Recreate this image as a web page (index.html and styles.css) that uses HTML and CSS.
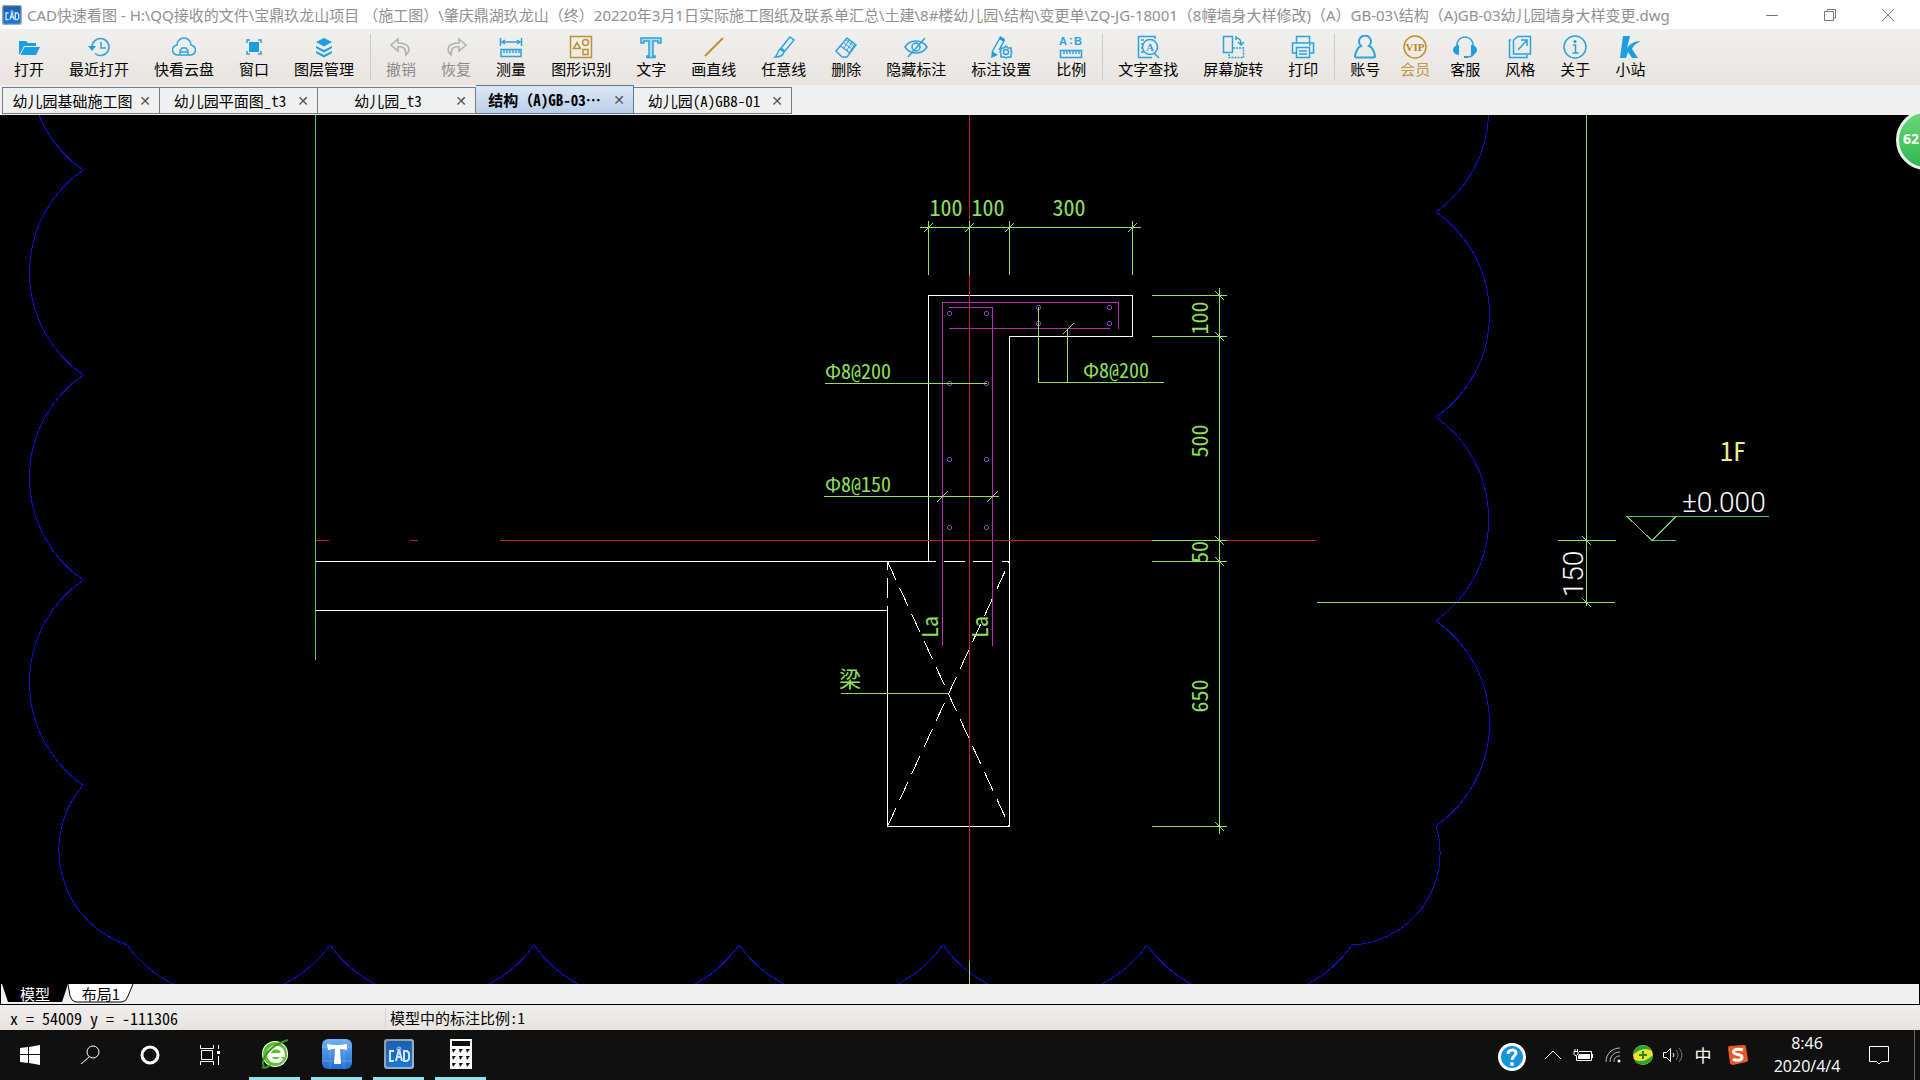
FILE: index.html
```html
<!DOCTYPE html>
<html lang="zh-CN">
<head>
<meta charset="utf-8">
<title>CAD快速看图</title>
<link rel="stylesheet" href="styles.css">
</head>
<body>
<svg class="defs" aria-hidden="true">
  <defs>
    <linearGradient id="gCad" x1="0" y1="0" x2="0" y2="1"><stop offset="0" stop-color="#1c5fb0"/><stop offset="1" stop-color="#1a78d8"/></linearGradient>
    <linearGradient id="gSteel" x1="0" y1="0" x2="1" y2="1"><stop offset="0" stop-color="#8d99a8"/><stop offset="1" stop-color="#aab4c0"/></linearGradient>
    <linearGradient id="gT" x1="0" y1="0" x2="0" y2="1"><stop offset="0" stop-color="#6fb0f4"/><stop offset="1" stop-color="#1f6ed0"/></linearGradient>
    <symbol id="cad" viewBox="0 0 30 30">
      <rect x="0" y="0" width="30" height="30" rx="3" fill="url(#gSteel)"/>
      <rect x="2" y="2" width="26" height="26" rx="2" fill="url(#gCad)"/>
      <path d="M10 12H6v10h4M12 22l3-12 3 12M13 18h4M20 12v10h3l2-2v-6l-2-2z" fill="none" stroke="#cfe6ff" stroke-width="2"/>
      <circle cx="15" cy="10" r="2" fill="none" stroke="#9cc8f4"/>
    </symbol>
  </defs>
</svg>

<header class="titlebar">
  <svg class="app-icon"><use href="#cad"/></svg>
  <h1 class="title">CAD快速看图 - H:\QQ接收的文件\宝鼎玖龙山项目 （施工图）\肇庆鼎湖玖龙山（终）20220年3月1日实际施工图纸及联系单汇总\土建\8#楼幼儿园\结构\变更单\ZQ-JG-18001（8幢墙身大样修改)（A）GB-03\结构（A)GB-03幼儿园墙身大样变更.dwg</h1>
  <div class="win-controls">
    <button aria-label="最小化"><svg viewBox="0 0 14 14"><path d="M1 7.500h12"/></svg></button>
    <button aria-label="还原"><svg viewBox="0 0 14 14"><path d="M1.500 3.500h9v9h-9zM4 3V1.500h8.500V10H11"/></svg></button>
    <button aria-label="关闭"><svg viewBox="0 0 14 14"><path d="M1 1l12 12M13 1L1 13"/></svg></button>
  </div>
</header>

<nav class="toolbar">
  <button class="tool"><svg viewBox="0 0 24 24"><path class="f" d="M2 6h7l2 2h8v3H7l-4 8H2zM7.500 12H23l-4 8H3.500z"/></svg>打开</button>
  <button class="tool"><svg viewBox="0 0 24 24"><path d="M5 12a8.500 8.500 0 1 1 3 6.500M14 7v6h5"/><path class="f" d="M1 11h8l-4 5z"/></svg>最近打开</button>
  <button class="tool"><svg viewBox="0 0 24 24"><path d="M6 20a5 5 0 0 1-1-10 7 7 0 0 1 14 0 5 5 0 0 1-1 10zM8 20v-4l2-3h4l2 3v4M9 17h6"/></svg>快看云盘</button>
  <button class="tool"><svg viewBox="0 0 24 24"><path class="f" d="M7 7h10v10H7z"/><path d="M5 8V5h3M16 5h3v3M19 16v3h-3M8 19H5v-3"/></svg>窗口</button>
  <button class="tool"><svg viewBox="0 0 24 24"><path class="f" d="M12 3l8 4-8 4.500L4 7zM4 11l8 4 8-4v2l-8 4.500L4 13zM4 16l8 4 8-4v2l-8 4.500L4 18z"/></svg>图层管理</button>
  <span class="sep"></span>
  <button class="tool off" disabled><svg viewBox="0 0 24 24"><path d="M9 4l-7 6 7 6v-4c6-1 8 2 8 8 5-5 4-12-8-12z"/></svg>撤销</button>
  <button class="tool off" disabled><svg viewBox="0 0 24 24"><path d="M15 4l7 6-7 6v-4c-6-1-8 2-8 8-5-5-4-12 8-12z"/></svg>恢复</button>
  <button class="tool"><svg viewBox="0 0 24 24"><path d="M1.500 3v8M22.500 3v8M3 7h18M6 5L3 7l3 2M18 5l3 2-3 2M2 14.500h20v7H2zM5 15v3M8 15v3M11 15v3M14 15v3M17 15v3M20 15v3"/></svg>测量</button>
  <button class="tool gold"><svg viewBox="0 0 24 24"><path d="M1.500 1.500h21v21h-21zM4.500 13.500l3.500-6 3.500 6zM14 14.500h5v5h-5z"/><circle cx="16.500" cy="7.500" r="3"/></svg>图形识别</button>
  <button class="tool"><svg viewBox="0 0 24 24"><path d="M2 3h20v5h-3V6h-5v15h2v1.500H8V21h2V6H5v2H2z" fill="#a9daf6"/></svg>文字</button>
  <button class="tool gold"><svg viewBox="0 0 24 24"><path d="M3 21L21 3" stroke-width="2"/></svg>画直线</button>
  <button class="tool"><svg viewBox="0 0 24 24"><path d="M18 2l4 3-9 11-4-3zM8 14l4 3c-1 4-4 5-9 5 3-2 2-5 5-8z"/></svg>任意线</button>
  <button class="tool"><svg viewBox="0 0 24 24"><path d="M13 3l9 7-9 12H8l-6-6zM6.500 11l9.500 7"/><path d="M10 8l8 6M12 5l8 6M15 5l-5 8M18 7l-5 8M21 10l-5 6" stroke-width="1"/></svg>删除</button>
  <button class="tool"><svg viewBox="0 0 24 24"><path d="M1 12c5-8 17-8 22 0-5 8-17 8-22 0zM21 3L4 22"/><circle cx="12" cy="12" r="4"/></svg>隐藏标注</button>
  <button class="tool"><svg viewBox="0 0 24 24"><path d="M3 17L11 3l4 3-5 9"/><path class="f" d="M3 16l6 4-7 3zM11 1l5 3-1 3-5-3z"/><path d="M17 11l2 2h3v3l1 1-1 2v3h-3l-2 1-2-1h-3v-3l-1-2 1-1v-3h3z"/><circle cx="17" cy="17" r="2.500"/></svg>标注设置</button>
  <button class="tool"><svg viewBox="0 0 24 24"><path d="M1.500 15.500h21v7h-21zM5 16v3M8 16v3M11 16v3M14 16v3M17 16v3M20 16v3"/><text x="0" y="10">A</text><text x="10" y="9">:</text><text x="15" y="10">B</text></svg>比例</button>
  <span class="sep"></span>
  <button class="tool"><svg viewBox="0 0 24 24"><path d="M19 4V1.500H2.500v21H16M5 5h3M5 9h2M5 13h2M5 17h3M18 18l5 5"/><circle cx="14" cy="12" r="7.500"/><text class="serif" x="10" y="16">A</text></svg>文字查找</button>
  <button class="tool"><svg viewBox="0 0 24 24"><path d="M2.500 1.500h9v16h-9zM15 3c4 0 5 2 5 6M17 7l3 3 3-3M15 1v4"/><path d="M12 13h10.500v9.500H8V19" stroke-dasharray="2 1"/></svg>屏幕旋转</button>
  <button class="tool"><svg viewBox="0 0 24 24"><path d="M5.500 8V1.500h13V8M5 18H1.500V8h21v10H19M5.500 12.500h13v10h-13zM8 16h8M8 19h8M18 10h2"/></svg>打印</button>
  <span class="sep"></span>
  <button class="tool"><svg viewBox="0 0 24 24"><path d="M8 11a6 6 0 1 1 8 0c3 1 5 5 6 10 0 1-1 1.500-2 1.500H4c-1 0-2-.500-2-1.500 1-5 3-9 6-10z" stroke-width="2"/></svg>账号</button>
  <button class="tool gold vip"><svg viewBox="0 0 24 24"><circle cx="12" cy="12" r="11" stroke-width="1.500"/><text class="serif vip-text" x="12" y="16" text-anchor="middle">VIP</text></svg>会员</button>
  <button class="tool"><svg viewBox="0 0 24 24"><path d="M4 14V10a8 8 0 0 1 16 0v4M21 18c-1 3-3 4-7 4"/><path class="f" d="M6 10v10c-4 0-6-3-6-5s2-5 6-5zM18 10v10c4 0 6-3 6-5s-2-5-6-5zM11 21h4v2h-4z"/></svg>客服</button>
  <button class="tool"><svg viewBox="0 0 24 24"><path d="M10 1.500h12.500V19H5.500V5zM3 5H1.500v17.500H19V20M10 15l9-10M13 5h6v6"/></svg>风格</button>
  <button class="tool"><svg viewBox="0 0 24 24"><circle cx="12" cy="12" r="11"/><path d="M10 10h2.500v8M9.500 18h6"/><circle class="f" cx="12" cy="6.500" r="1.500"/></svg>关于</button>
  <button class="tool"><svg viewBox="0 0 24 24"><path class="f" d="M5 1h7L9 13c3-4 7-7 14-7-5 2-8 5-9 8l6 9h-6l-4-6-2 6H2z"/></svg>小站</button>
</nav>

<div class="tabs">
  <div class="tab"><span>幼儿园基础施工图</span><button aria-label="关闭标签">✕</button></div>
  <div class="tab"><span>幼儿园平面图_t3</span><button aria-label="关闭标签">✕</button></div>
  <div class="tab"><span>幼儿园_t3</span><button aria-label="关闭标签">✕</button></div>
  <div class="tab active"><span>结构（A)GB-03…</span><button aria-label="关闭标签">✕</button></div>
  <div class="tab"><span>幼儿园(A)GB8-01</span><button aria-label="关闭标签">✕</button></div>
</div>

<main class="canvas">
  <svg class="drawing" viewBox="0 115 1920 869" preserveAspectRatio="xMidYMin slice">
    <!-- revision cloud -->
    <path class="blue" d="M83 -35A125 125 0 0 0 83 170A125 125 0 0 0 83 375A125 125 0 0 0 83 580A125 125 0 0 0 83 785A100 100 0 0 0 127 945A125 125 0 0 0 330 945A125 125 0 0 0 534 945A125 125 0 0 0 739 945A125 125 0 0 0 943 945A125 125 0 0 0 1147 945A125 125 0 0 0 1352 945A92 92 0 0 0 1436 826A125 125 0 0 0 1436 621A125 125 0 0 0 1436 417A125 125 0 0 0 1436 212A125 125 0 0 0 1436 8"/>
    <!-- section outline -->
    <path class="white" d="M316 561.500H936M944 561.500h21M973 561.500h19M1002 561.500h7M316 610.500H887.500M928.500 561V295.500h204v41h-123v490h-122V606M887.500 561v9M887.500 578v20"/>
    <path class="white dash" d="M887.500 561.500l122 265M887.500 826.500l122-265"/>
    <!-- rebar -->
    <path class="magenta" d="M942.500 646V302.500h176V329M949 307.500h43.500V646M949 328.500h161"/>
    <g class="violet">
      <circle cx="949.500" cy="313.500" r="2"/><circle cx="986.500" cy="313.500" r="2"/><circle cx="1038.500" cy="307.500" r="2"/><circle cx="1038.500" cy="323.500" r="2"/><circle cx="1109.500" cy="307.500" r="2"/><circle cx="1109.500" cy="323.500" r="2"/><circle cx="949.500" cy="383.500" r="2"/><circle cx="986.500" cy="383.500" r="2"/><circle cx="949.500" cy="459.500" r="2"/><circle cx="986.500" cy="459.500" r="2"/><circle cx="949.500" cy="527.500" r="2"/><circle cx="986.500" cy="527.500" r="2"/>
    </g>
    <!-- axes -->
    <path class="red" d="M969.500 115V984M316 540.500h13M410 540.500h8M500 540.500h817"/>
    <!-- dimensions -->
    <path class="leaf" d="M315.500 115V660"/>
    <path class="green" d="M920 227.500h221M928.500 221v54M969.500 221v54M1009.500 221v54M1132.500 221v54M1219.500 288V834M1152 295.500h75M1152 336.500h75M1152 540.500h75M1152 561.500h75M1152 826.500h75M1038.500 307v75.500H1164M1067.500 329v53M825 383.500h162M824 496.500h175M841 693.500h107M1586.500 115V606M1558 540.500h58M1317 602.500h298M969.500 961v23"/>
    <path class="green" d="M924 232l9-9M965 232l9-9M1005 232l9-9M1128 232l9-9M1215 291l9 9M1215 332l9 9M1215 536l9 9M1215 557l9 9M1215 822l9 9M937 502l11-11M987 502l11-11M1063 334l11-11M1582 536l9 9M1582 598l9 9"/>
    <path class="leaf" d="M1769 516.500H1627l25 24 24-24M1652 540.500h24"/>
    <g class="dim" text-anchor="middle">
      <text x="946" y="216">100</text><text x="988" y="216">100</text><text x="1069" y="216">300</text>
      <text transform="translate(1208 318) rotate(-90)">100</text>
      <text transform="translate(1208 441) rotate(-90)">500</text>
      <text transform="translate(1208 552) rotate(-90)">50</text>
      <text transform="translate(1208 696) rotate(-90)">650</text>
      <text transform="translate(938 627) rotate(-90)">La</text>
      <text transform="translate(988 627) rotate(-90)">La</text>
      <text x="850" y="687">梁</text>
    </g>
    <g class="dim note">
      <text x="825" y="379">Φ8@200</text><text x="825" y="492">Φ8@150</text><text x="1083" y="378">Φ8@200</text>
    </g>
    <text class="floor" x="1733" y="461" text-anchor="middle">1F</text>
    <text class="level" x="1682" y="512">±0.000</text>
    <text class="level" text-anchor="middle" transform="translate(1583 574) rotate(-90)">150</text>
  </svg>
  <div class="badge">62</div>
</main>

<div class="layouts">
  <button class="layout on"><svg viewBox="0 0 66 19" preserveAspectRatio="none"><path d="M0 0h66l-6 18H6z" fill="#000"/></svg><span>模型</span></button>
  <button class="layout"><svg viewBox="0 0 66 19" preserveAspectRatio="none"><path d="M0 0l2 12q2 6 6 6h46q4 0 6-6L65 0" fill="#fff" stroke="#000"/></svg><span>布局1</span></button>
</div>

<div class="status">
  <span class="coords">x = 54009 y = -111306</span>
  <span class="scale">模型中的标注比例:1</span>
</div>

<footer class="taskbar">
  <button class="sys" aria-label="开始"><svg width="20" height="20" viewBox="0 0 20 20"><path d="M0 3l8-1v7H0zM9 2l11-2v9H9zM0 10h8v8l-8-1zM9 10h11v10L9 18z" fill="#fff"/></svg></button>
  <button class="sys" aria-label="搜索"><svg class="line" width="20" height="20" viewBox="0 0 20 20"><circle cx="13" cy="7" r="6"/><path d="M9 12l-8 7"/></svg></button>
  <button class="sys" aria-label="小娜"><svg class="line" width="20" height="20" viewBox="0 0 20 20"><circle cx="10" cy="10" r="8" stroke-width="3"/></svg></button>
  <button class="sys" aria-label="任务视图"><svg class="line" width="20" height="20" viewBox="0 0 20 20"><path d="M.500 0v3.500h13V0M.500 20v-3.500h13V20M1.500 5.500h11v9h-11zM18.500 0v4M18.500 11v9"/><path d="M17 6h3v3h-3z" fill="#fff" stroke="none"/></svg></button>
  <div class="apps">
    <button aria-label="浏览器"><svg width="30" height="30" viewBox="0 0 30 30"><circle cx="15" cy="15" r="13" fill="#fff"/><circle cx="15" cy="15" r="12" fill="#5cc22c"/><path d="M8 16h15c0-10-14-10-14-1 0 8 9 9 13 4" fill="none" stroke="#fff" stroke-width="4"/><path d="M4 28c-4-8 6-22 24-27M2 28c2 2 6 0 8-2" fill="none" stroke="#2f9a1c" stroke-width="2"/></svg></button>
    <button aria-label="天正"><svg width="30" height="30" viewBox="0 0 30 30"><rect width="30" height="30" rx="6" fill="url(#gT)"/><path d="M8 0v30M22 0v30M0 8h30M0 22h30" stroke="#fff" opacity=".2"/><path d="M5 5q10 2 20 0v6q-4-1-7-1l1 15h-7l1-15q-4 0-7 1z" fill="#fff"/></svg></button>
    <button aria-label="CAD快速看图"><svg width="30" height="30"><use href="#cad"/></svg></button>
    <button aria-label="计算器"><svg width="22" height="30" viewBox="0 0 22 30"><path d="M0 0h22v30H0z" fill="#fff"/><path d="M2 2h18v5H2zM2 10h4l-3 4zM9 10h4l-3 4zM16 10h4l-3 4zM2 17h4l-3 4zM9 17h4l-3 4zM16 17h4l-3 4zM2 24h4l-3 4zM9 24h4l-3 4zM16 24h4l-3 4z" fill="#101010"/></svg></button>
  </div>
  <div class="tray">
    <button class="t-help" aria-label="帮助"><svg width="28" height="28" viewBox="0 0 28 28"><circle cx="14" cy="14" r="14" fill="#fff"/><circle cx="14" cy="14" r="11" fill="#1592d8"/><path d="M10 11c0-5 8-5 8-1 0 3-4 3-4 7" fill="none" stroke="#fff" stroke-width="3"/><circle cx="14" cy="21" r="2" fill="#fff"/></svg></button>
    <button aria-label="显示隐藏的图标"><svg class="line" width="16" height="10" viewBox="0 0 16 10"><path d="M0 9l8-8 8 8"/></svg></button>
    <button aria-label="电池"><svg class="line" width="20" height="16" viewBox="0 0 20 16"><path d="M6 4.500h12.500v9H3.500V9M19.500 7v4M1 4.500h4V7L3.500 8.500H2L1 7zM2 2v2M4.500 2v2"/><path d="M6 7h11v5H5V9z" fill="#fff" stroke="none"/></svg></button>
    <button aria-label="网络"><svg class="line" width="16" height="16" viewBox="0 0 16 16"><path d="M1 15C1 7 7 1 15 1M5 15C5 9 9 5 15 5M9 15c0-4 2-6 6-6" stroke="#bbb"/><circle cx="14" cy="14" r="1.500" fill="#fff" stroke="none"/></svg></button>
    <button aria-label="安全卫士"><svg width="20" height="20" viewBox="0 0 20 20"><circle cx="10" cy="10" r="10" fill="#f4e02c"/><path d="M0 10a10 10 0 0 1 19-4c-6-4-13-2-19 4zM20 10a10 10 0 0 1-19 4c6 4 13 2 19-4z" fill="#26a33a"/><path d="M10 6v8M6 10h8" stroke="#168a2c" stroke-width="2"/></svg></button>
    <button aria-label="音量"><svg class="line" width="20" height="18" viewBox="0 0 20 18"><path d="M.500 6.500h3l4-4v13l-4-4h-3zM10 7q2 2 0 4"/><path d="M13 4q4 5 0 10M16 2q6 7 0 14" stroke="#777"/></svg></button>
    <button class="ime">中</button>
    <button class="t-sogou" aria-label="搜狗输入法"><svg width="20" height="20" viewBox="0 0 20 20"><path d="M0 3q0-2 2-2l14-1q2 0 2 2l2 13q0 2-2 2L5 20q-2 0-3-2z" fill="#e35a28"/><path d="M15 5C9 3 4 5 6 8c2 2 8 1 8 4 0 4-6 4-9 2" fill="none" stroke="#fff" stroke-width="3"/></svg></button>
    <time class="clock" datetime="2020-04-04T08:46">8:46<br>2020/4/4</time>
    <button class="t-note" aria-label="通知"><svg class="line" width="20" height="20" viewBox="0 0 20 20"><path d="M.500 1.500h19v15h-7L10 19l-2.500-2.500h-7z"/></svg></button>
    <button class="desk" aria-label="显示桌面"></button>
  </div>
</footer>
</body>
</html>
```
FILE: styles.css
```css
* { box-sizing: border-box; }
html { height: 100%; }
body {
  margin: 0;
  min-height: 100vh;
  display: flex;
  flex-direction: column;
  overflow: hidden;
  background: #f0f0f0;
  color: #000;
  font: 15px/20px "Noto Sans Mono CJK SC", "Noto Sans CJK SC", sans-serif;
}
button { border: 0; padding: 0; background: none; color: inherit; font: inherit; }
.defs { position: absolute; width: 0; height: 0; }

/* title bar */
.titlebar { display: flex; align-items: center; height: 29px; background: #fff; padding: 0 3px 0 2px; }
.app-icon { width: 20px; height: 20px; flex: none; }
.title {
  flex: 1;
  min-width: 0;
  margin: 0 0 0 5px;
  overflow: hidden;
  white-space: nowrap;
  color: #909090;
  font: 15px/28px "Noto Sans", "Noto Sans CJK SC", sans-serif;
}
.win-controls { display: flex; }
.win-controls button { width: 58px; height: 28px; display: grid; place-items: center; }
.win-controls svg { width: 14px; height: 14px; fill: none; stroke: #777; }

/* toolbar */
.toolbar {
  display: flex;
  gap: 1px;
  height: 56px;
  padding-left: 2px;
  background: linear-gradient(#f0f0ee, #e9e4e0);
}
.tool {
  display: flex;
  flex-direction: column;
  align-items: center;
  padding: 6px 12px 0;
  white-space: nowrap;
}
.tool svg { width: 24px; height: 24px; fill: none; stroke: #2ba3dc; stroke-width: 1.5; }
.tool .f { fill: #1c9ee0; stroke: none; }
.tool text { fill: #2ba3dc; stroke: none; font: bold 11px "Liberation Sans", sans-serif; }
.tool .serif { font-family: "Liberation Serif", serif; }
.tool.gold svg { stroke: #bd9232; }
.tool .vip-text { fill: #b8861c; }
.tool.off { color: #8c8c8c; }
.tool.off svg { stroke: #b0b0b0; }
.tool.vip { padding-left: 7px; padding-right: 7px; color: #c09a48; }
.sep { width: 1px; margin: 5px 2px 5px 3px; background: #cbcbcb; }

/* document tabs */
.tabs { display: flex; align-items: flex-end; height: 30px; padding: 0 0 1px 2px; }
.tab {
  display: flex;
  align-items: center;
  width: 158px;
  height: 27px;
  padding: 0 8px 0 3px;
  border: 1px solid #7c7c7c;
  border-left-width: 0;
}
.tab:first-child { border-left-width: 1px; }
.tab span { flex: 1; text-align: center; white-space: nowrap; }
.tab button { width: 12px; color: #555; font: 14px/20px "DejaVu Sans", sans-serif; }
.tab.active { height: 29px; padding-left: 0; background: linear-gradient(#dce8f6, #b9cfea); border-color: #5c7590; font-weight: bold; }

/* drawing area */
.canvas { position: relative; flex: 1; min-height: 0; background: #000; }
.drawing { position: absolute; inset: 0; width: 100%; height: 100%; shape-rendering: crispEdges; }
.drawing path, .drawing circle { fill: none; stroke-width: 1; }
.drawing .blue { stroke: #1010c8; }
.drawing .white { stroke: #fff; }
.drawing .dash { stroke-dasharray: 20 9; }
.drawing .magenta { stroke: #b432b4; }
.violet { stroke: #8a36c0; }
.drawing .red { stroke: #c02020; }
.drawing .green { stroke: #8fe060; }
.drawing .leaf { stroke: #5cc85c; }
.dim { fill: #8fe060; font: 300 22px "Noto Sans Mono CJK SC", "Noto Sans CJK SC", sans-serif; }
.note { font-size: 20px; }
.floor { fill: #eeee80; font: 300 26px "Noto Sans Mono CJK SC", sans-serif; }
.level { fill: #fff; font: 300 28px Roboto, "Liberation Sans", sans-serif; }
.badge {
  position: absolute;
  top: -5px;
  right: -36px;
  width: 60px;
  height: 60px;
  padding-left: 4px;
  border: 3px solid #e8f4e8;
  border-radius: 50%;
  background: linear-gradient(#6cd67c, #2fb84c);
  color: #fff;
  font: bold 14px/52px "Open Sans", sans-serif;
}

/* layout tabs */
.layouts { display: flex; height: 21px; padding-left: 1px; border: solid #000; border-width: 0 1px 1px; }
.layout { position: relative; width: 66px; height: 19px; font: 15px/19px "Noto Sans CJK SC", sans-serif; }
.layout svg { position: absolute; inset: 0; width: 66px; height: 19px; }
.layout span { position: relative; }
.on { color: #fff; }

/* status bar */
.status { display: flex; align-items: center; height: 25px; background: linear-gradient(#efeeec, #e8e3df); }
.coords { width: 386px; padding-left: 10px; border-right: 1px solid #d4d4d4; font-size: 16px; }
.scale { padding-left: 4px; }

/* taskbar */
.taskbar { display: flex; height: 50px; background: #101010; color: #fff; }
.taskbar button { display: grid; place-items: center; }
.taskbar .line { fill: none; stroke: #fff; stroke-width: 1; }
.sys { width: 60px; }
.apps { display: flex; gap: 11px; margin-left: 9px; }
.apps button { width: 51px; border-bottom: 3px solid #8ee4f0; }
.tray { display: flex; margin-left: auto; }
.tray button { width: 30px; }
.tray .t-help { width: 52px; padding-top: 3px; }
.tray .ime { font: 17px/20px "Noto Sans CJK SC", sans-serif; }
.tray .t-sogou { width: 40px; }
.clock { width: 98px; padding-top: 2px; text-align: center; font: 16px/23px "Open Sans", sans-serif; }
.tray .t-note { width: 46px; }
.tray .desk { width: 6px; margin-left: 12px; border-left: 1px solid #666; }
```
